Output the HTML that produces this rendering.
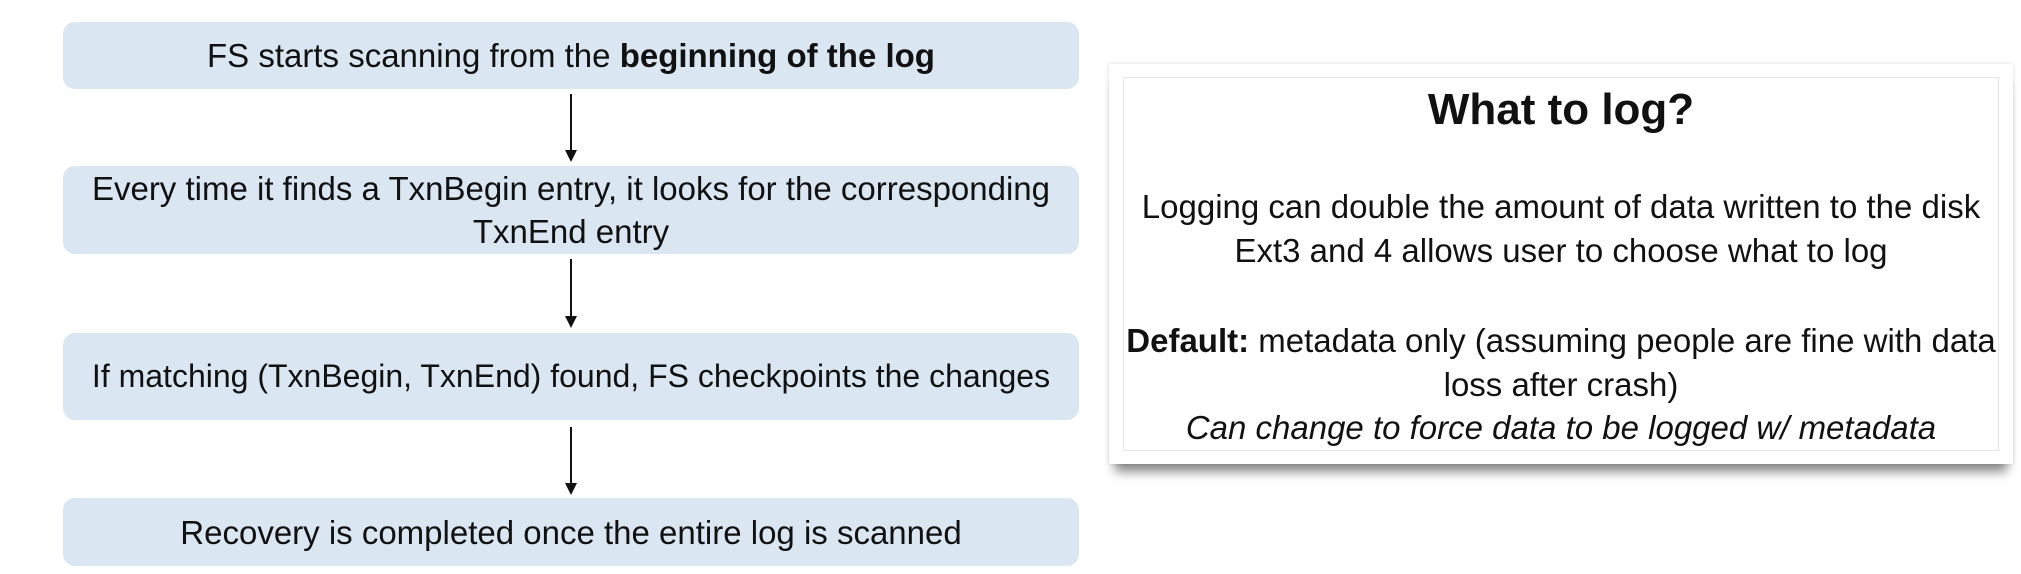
<!DOCTYPE html>
<html><head><meta charset="utf-8"><style>
html,body{margin:0;padding:0;background:#fff;}
body{width:2021px;height:574px;position:relative;overflow:hidden;font-family:"Liberation Sans",sans-serif;color:#111;}
.box{position:absolute;left:63px;width:1016px;background:#dae6f2;border-radius:12px;display:flex;align-items:center;justify-content:center;text-align:center;font-size:33px;line-height:43px;}
.arr{position:absolute;left:570px;width:2px;background:#111;}
.arr:after{content:"";position:absolute;left:-5px;bottom:-2px;border-left:6px solid transparent;border-right:6px solid transparent;border-top:12px solid #111;}
.card{position:absolute;left:1109px;top:64px;width:904px;height:400px;background:#fff;box-shadow:0 14px 10px -6px rgba(0,0,0,0.45),0 0 4px rgba(0,0,0,0.15);}
.inner{position:absolute;left:14px;top:13px;right:14px;bottom:13px;border:1px solid #e6e6e6;text-align:center;font-size:33px;line-height:38px;}
.t{position:absolute;left:0;right:0;text-align:center;white-space:nowrap;}
</style></head><body>
<div class="box" style="top:22px;height:67px;">FS starts scanning from the&nbsp;<b>beginning of the log</b></div>
<div class="arr" style="top:94px;height:66px;"></div>
<div class="box" style="top:166px;height:88px;">Every time it finds a TxnBegin entry, it looks for the corresponding<br>TxnEnd entry</div>
<div class="arr" style="top:259px;height:67px;"></div>
<div class="box" style="top:333px;height:87px;font-size:32px;">If matching (TxnBegin, TxnEnd) found, FS checkpoints the changes</div>
<div class="arr" style="top:427px;height:66px;"></div>
<div class="box" style="top:498px;height:68px;">Recovery is completed once the entire log is scanned</div>
<div class="card"><div class="inner">
<div class="t" style="top:7px;font-size:44px;line-height:50px;font-weight:bold;">What to log?</div>
<div class="t" style="top:110px;">Logging can double the amount of data written to the disk</div>
<div class="t" style="top:154px;">Ext3 and 4 allows user to choose what to log</div>
<div class="t" style="top:244px;"><b>Default:</b> metadata only (assuming people are fine with data</div>
<div class="t" style="top:288px;">loss after crash)</div>
<div class="t" style="top:331px;font-style:italic;">Can change to force data to be logged w/ metadata</div>
</div></div>
</body></html>
